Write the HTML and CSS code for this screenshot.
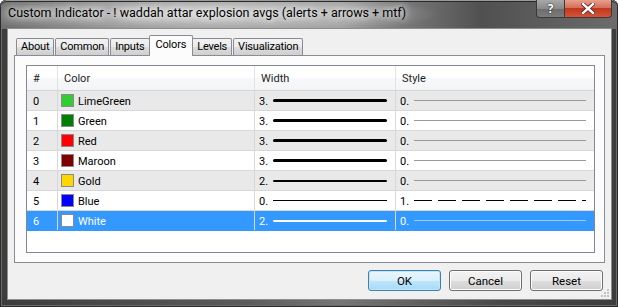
FILE: index.html
```html
<!DOCTYPE html>
<html lang="en">
<head>
    <meta charset="UTF-8">
    <title>Custom Indicator</title>
    <link rel="stylesheet" href="styles.css">
</head>
<body>
    <div class="window">
        <div class="titlebar">
            <span class="title">Custom Indicator - ! waddah attar explosion avgs (alerts + arrows + mtf)</span>
            <div class="caption">
                <span class="cap-btn help">?</span>
                <span class="cap-btn close">
                    <svg width="14" height="11" viewBox="0 0 14 11">
                        <path d="M2 1 L12 10 M12 1 L2 10" stroke="#5a2020" stroke-width="4" stroke-linecap="square"/>
                        <path d="M2 1 L12 10 M12 1 L2 10" stroke="#fff" stroke-width="2.4" stroke-linecap="square"/>
                    </svg>
                </span>
            </div>
        </div>

        <div class="client">
            <div class="tabs">
                <span class="tab">About</span>
                <span class="tab">Common</span>
                <span class="tab">Inputs</span>
                <span class="tab active">Colors</span>
                <span class="tab">Levels</span>
                <span class="tab">Visualization</span>
            </div>

            <div class="panel">
                <div class="grid">
                    <div class="row head">
                        <div class="cell num">#</div>
                        <div class="cell name">Color</div>
                        <div class="cell width">Width</div>
                        <div class="cell style">Style</div>
                    </div>

                    <div class="row shade">
                        <div class="cell num">0</div>
                        <div class="cell name"><span class="swatch sw-lime"></span>LimeGreen</div>
                        <div class="cell width"><span>3.</span><span class="line thick3"></span></div>
                        <div class="cell style"><span>0.</span><span class="line thin"></span></div>
                    </div>
                    <div class="row">
                        <div class="cell num">1</div>
                        <div class="cell name"><span class="swatch sw-green"></span>Green</div>
                        <div class="cell width"><span>3.</span><span class="line thick3"></span></div>
                        <div class="cell style"><span>0.</span><span class="line thin"></span></div>
                    </div>
                    <div class="row shade">
                        <div class="cell num">2</div>
                        <div class="cell name"><span class="swatch sw-red"></span>Red</div>
                        <div class="cell width"><span>3.</span><span class="line thick3"></span></div>
                        <div class="cell style"><span>0.</span><span class="line thin"></span></div>
                    </div>
                    <div class="row">
                        <div class="cell num">3</div>
                        <div class="cell name"><span class="swatch sw-maroon"></span>Maroon</div>
                        <div class="cell width"><span>3.</span><span class="line thick3"></span></div>
                        <div class="cell style"><span>0.</span><span class="line thin"></span></div>
                    </div>
                    <div class="row shade">
                        <div class="cell num">4</div>
                        <div class="cell name"><span class="swatch sw-gold"></span>Gold</div>
                        <div class="cell width"><span>2.</span><span class="line thick2"></span></div>
                        <div class="cell style"><span>0.</span><span class="line thin"></span></div>
                    </div>
                    <div class="row">
                        <div class="cell num">5</div>
                        <div class="cell name"><span class="swatch sw-blue"></span>Blue</div>
                        <div class="cell width"><span>0.</span><span class="line thick1"></span></div>
                        <div class="cell style"><span>1.</span><span class="line dash"></span></div>
                    </div>
                    <div class="row selected">
                        <div class="cell num">6</div>
                        <div class="cell name"><span class="swatch sw-white"></span>White</div>
                        <div class="cell width"><span>2.</span><span class="line thick2"></span></div>
                        <div class="cell style"><span>0.</span><span class="line thin"></span></div>
                    </div>
                </div>
            </div>

            <div class="actions">
                <button class="btn default">OK</button>
                <button class="btn">Cancel</button>
                <button class="btn">Reset</button>
            </div>

            <svg class="grip" width="9" height="9" viewBox="0 0 9 9">
                <rect x="6" y="0" width="2" height="2" fill="#c4c4c4"/>
                <rect x="3" y="3" width="2" height="2" fill="#c4c4c4"/>
                <rect x="6" y="3" width="2" height="2" fill="#c4c4c4"/>
                <rect x="0" y="6" width="2" height="2" fill="#c4c4c4"/>
                <rect x="3" y="6" width="2" height="2" fill="#c4c4c4"/>
                <rect x="6" y="6" width="2" height="2" fill="#c4c4c4"/>
            </svg>
        </div>
    </div>
</body>
</html>
```

FILE: styles.css
```css
body {
    margin: 0;
    padding: 0;
    background-color: #fff;
    font-family: Roboto, 'Open Sans', 'DejaVu Sans', sans-serif;
    font-size: 11px;
    color: #000;
}

.window {
    width: 618px;
    height: 307px;
    box-sizing: border-box;
    display: flex;
    flex-direction: column;
    padding: 0 7px 8px 8px;
    border-radius: 6px 6px 0 0;
    background: linear-gradient(to right, #3c3c3c 0%, #5c5c5c 40%, #767676 55%, #4a4a4a 80%, #3c3c3c 100%);
    box-shadow: inset 0 0 0 1px #2a2a2a, inset 0 0 0 2px #6a6a6a;
    overflow: hidden;
}

.titlebar {
    height: 29px;
    flex-shrink: 0;
    display: flex;
    margin: 0 -7px 0 -8px;
    padding: 0 6px 0 8px;
    border-radius: 6px 6px 0 0;
    background:
        radial-gradient(ellipse 240px 22px at 200px 14px, rgba(225, 225, 225, 0.85), rgba(225, 225, 225, 0) 100%),
        linear-gradient(to right, #6e6e6e 0%, #8c8c8c 30%, #9a9a9a 55%, #505050 78%, #6c6c6c 100%);
    box-shadow: inset 0 1px 0 #9a9a9a, inset 1px 0 0 #2a2a2a, inset -1px 0 0 #2a2a2a, inset 0 2px 0 #2a2a2a;
}

.title {
    font-size: 12.5px;
    line-height: 26px;
    color: #000;
    white-space: nowrap;
    text-shadow: 0 0 6px #fff, 0 0 10px #eee;
}

.caption {
    margin-left: auto;
    display: flex;
    height: 18px;
}

.cap-btn {
    display: flex;
    align-items: center;
    justify-content: center;
    box-sizing: border-box;
    height: 18px;
    border: 1px solid #3a3a3a;
    border-top: none;
}

.help {
    width: 28px;
    border-radius: 0 0 0 4px;
    border-right: none;
    background: linear-gradient(#a8a8a8 0%, #8a8a8a 50%, #6c6c6c 51%, #7c7c7c 100%);
    color: #fff;
    font-family: 'Open Sans', sans-serif;
    font-weight: bold;
    font-size: 12px;
    text-shadow: 0 0 2px #333, 0 0 1px #000;
}

.close {
    width: 48px;
    border-radius: 0 0 4px 0;
    background: linear-gradient(#e8a08c 0%, #d3705a 45%, #c2381c 50%, #d6533a 100%);
}

.client {
    flex: 1;
    position: relative;
    display: flex;
    flex-direction: column;
    padding: 6px 6px 0 6px;
    background-color: #f0f0f0;
    box-shadow: 0 0 0 1px #8e8e8e;
}

.tabs {
    display: flex;
    align-items: flex-end;
    height: 20px;
    padding-left: 2px;
}

.tab {
    box-sizing: border-box;
    height: 17px;
    padding: 0 4px;
    margin-right: 1px;
    line-height: 15px;
    letter-spacing: -0.2px;
    border: 1px solid #898c95;
    border-bottom: none;
    border-radius: 2px 2px 0 0;
    background: linear-gradient(#f2f2f2 0%, #ebebeb 50%, #dddddd 51%, #cfcfcf 100%);
    color: #000;
}

.tab.active {
    position: relative;
    z-index: 1;
    height: 21px;
    margin: 0 -1px -1px -2px;
    padding: 0 6px;
    line-height: 17px;
    background: #fcfcfc;
}

.panel {
    box-sizing: border-box;
    height: 208px;
    padding: 9px 9px 9px 11px;
    border: 1px solid #898c95;
    background-color: #fcfcfc;
}

.grid {
    height: 100%;
    box-sizing: border-box;
    border: 1px solid #828790;
    background-color: #fff;
}

.row {
    display: grid;
    grid-template-columns: 31px 197px 141px 198px;
    height: 20px;
    box-sizing: border-box;
    border-bottom: 1px solid #d8d8d8;
}

.row.head {
    height: 25px;
    background: linear-gradient(#ffffff 0%, #ffffff 50%, #f7f8f9 51%, #f3f4f6 100%);
    border-bottom-color: #d5d5d5;
    color: #1e1e1e;
}

.row.shade {
    background-color: #e9e9e9;
}

.row.selected {
    background-color: #3399ff;
    border-bottom-color: #3399ff;
    color: #fff;
}

.cell {
    display: flex;
    align-items: center;
    min-width: 0;
    padding-left: 4px;
    padding-top: 1px;
    border-right: 1px solid #d8d8d8;
    white-space: nowrap;
}

.cell.style {
    border-right: none;
}

.head .cell {
    padding-left: 6px;
    border-right-color: #e2e3e5;
}

.cell.num {
    padding-left: 6px;
}

.name {
    padding-left: 3px;
}

.swatch {
    width: 13px;
    height: 13px;
    box-sizing: border-box;
    margin: -1px 4px 0 0;
    border: 1px solid #8a8a8a;
}

.sw-lime { background-color: #32cd32; }
.sw-green { background-color: #008000; }
.sw-red { background-color: #ff0000; }
.sw-maroon { background-color: #800000; }
.sw-gold { background-color: #ffd700; }
.sw-blue { background-color: #0000ff; }
.sw-white { background-color: #ffffff; }

.line {
    flex: 1;
    margin: -1px 8px 0 5px;
    background-color: #000;
}

.thick3 {
    height: 3px;
    border-radius: 2px;
}

.thick2 {
    height: 2px;
    border-radius: 1px;
}

.thick1 {
    height: 1px;
}

.thin {
    height: 1px;
    background-color: #9a9a9a;
}

.dash {
    height: 1px;
    background: repeating-linear-gradient(to right, #000 0, #000 18px, transparent 18px, transparent 24px);
}

.selected .line {
    background-color: #fff;
}

.selected .thin {
    background-color: #9fcdfa;
}

.actions {
    display: flex;
    justify-content: flex-end;
    gap: 8px;
    margin: 7px 2px 0 0;
}

.btn {
    width: 73px;
    height: 21px;
    padding: 0;
    font-family: inherit;
    font-size: 11.5px;
    color: #000;
    border: 1px solid #707070;
    border-radius: 3px;
    background: linear-gradient(#f2f2f2 0%, #ebebeb 50%, #dddddd 51%, #cfcfcf 100%);
    box-shadow: inset 0 0 0 1px #fcfcfc;
}

.btn.default {
    border-color: #3c7fb1;
    background: linear-gradient(#eaf6fd 0%, #d9f0fc 50%, #bee6fd 51%, #a7d9f5 100%);
    box-shadow: inset 0 0 0 1px #c4e5f6;
}

.grip {
    position: absolute;
    right: 1px;
    bottom: 1px;
}
```
